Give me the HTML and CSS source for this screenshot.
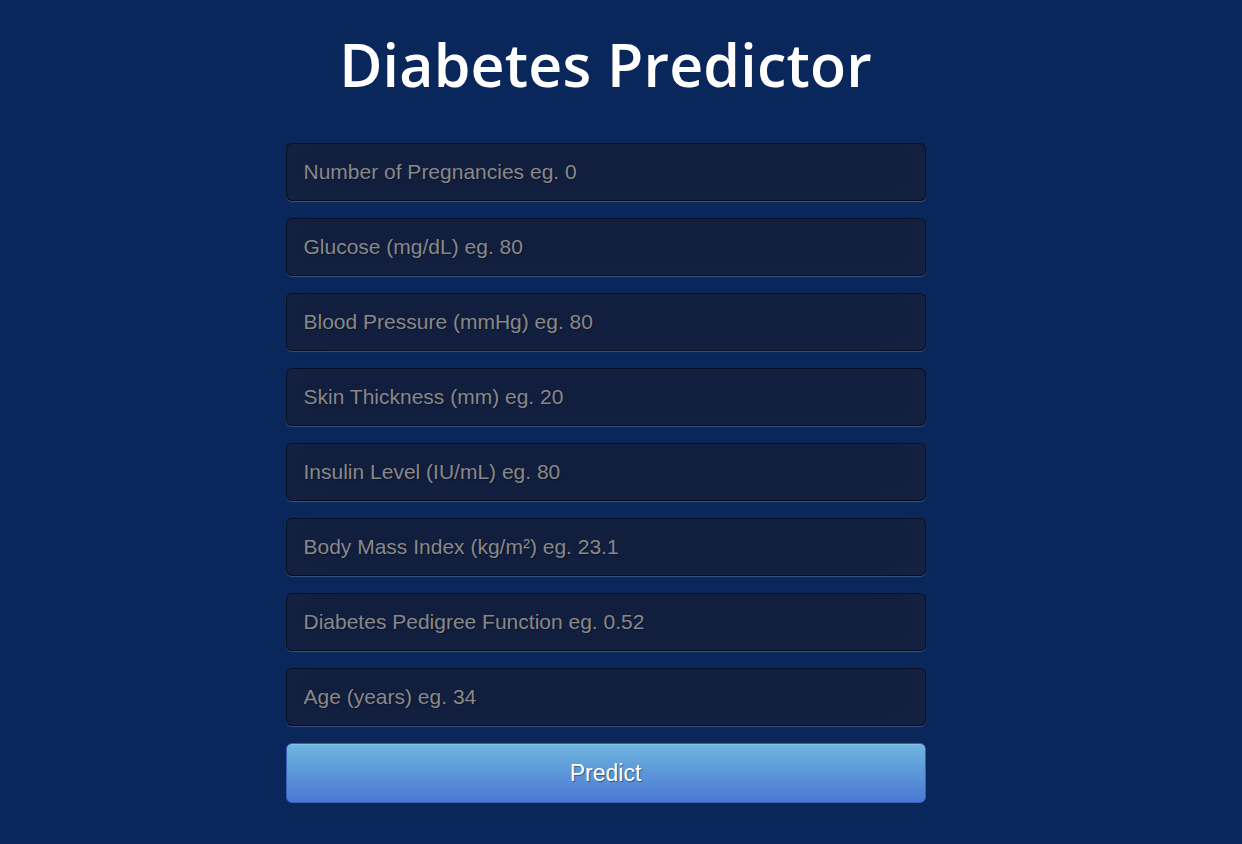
FILE: index.html
```html
<!DOCTYPE html>
<html>
<head>
<meta charset="utf-8">
<title>Diabetes Predictor</title>
<link rel="stylesheet" href="styles.css">
</head>
<body>
<main class="page">
  <h1 class="title">Diabetes Predictor</h1>
  <form class="form">
    <input class="field" type="text" placeholder="Number of Pregnancies eg. 0">
    <input class="field" type="text" placeholder="Glucose (mg/dL) eg. 80">
    <input class="field" type="text" placeholder="Blood Pressure (mmHg) eg. 80">
    <input class="field" type="text" placeholder="Skin Thickness (mm) eg. 20">
    <input class="field" type="text" placeholder="Insulin Level (IU/mL) eg. 80">
    <input class="field" type="text" placeholder="Body Mass Index (kg/m²) eg. 23.1">
    <input class="field" type="text" placeholder="Diabetes Pedigree Function eg. 0.52">
    <input class="field" type="text" placeholder="Age (years) eg. 34">
    <button class="btn" type="button">Predict</button>
  </form>
</main>
</body>
</html>
```

FILE: styles.css
```css
html, body {
  margin: 0;
  padding: 0;
  height: 100%;
}
body {
  background: #09275a;
  font-family: "Liberation Sans", Arial, sans-serif;
}
.page {
  display: flex;
  flex-direction: column;
  align-items: center;
  padding-right: 31px;
}
.title {
  margin: 24px 0 0;
  font-family: "Open Sans", sans-serif;
  font-weight: 600;
  font-size: 59px;
  line-height: 80px;
  color: #ffffff;
  letter-spacing: 0.2px;
}
.form {
  margin-top: 39px;
  width: 640px;
  display: flex;
  flex-direction: column;
  gap: 17px;
}
.field {
  box-sizing: border-box;
  width: 100%;
  height: 58px;
  margin: 0;
  padding: 0 17px;
  background: rgba(18, 29, 60, 0.92);
  border: 1px solid rgba(0, 0, 0, 0.45);
  border-radius: 6px;
  outline: none;
  font-family: "Liberation Sans", Arial, sans-serif;
  font-size: 21px;
  color: #ffffff;
  text-shadow: 1px 1px 1px rgba(0, 0, 0, 0.3);
  box-shadow: inset 0 -5px 45px rgba(100, 100, 100, 0.06), 0 1px 1px rgba(255, 255, 255, 0.2);
}
.field::placeholder {
  color: #888888;
}
.btn {
  box-sizing: border-box;
  width: 100%;
  height: 60px;
  margin: 0;
  border: 1px solid #3762bc;
  border-radius: 6px;
  background: linear-gradient(to bottom, #6eb6de, #4a77d4);
  color: #ffffff;
  font-family: "Liberation Sans", Arial, sans-serif;
  font-size: 23px;
  text-shadow: 1px 1px 1px rgba(0, 0, 0, 0.4);
  box-shadow: inset 0 1px 0 rgba(255, 255, 255, 0.2), 0 1px 2px rgba(0, 0, 0, 0.05);
  cursor: pointer;
}
```
